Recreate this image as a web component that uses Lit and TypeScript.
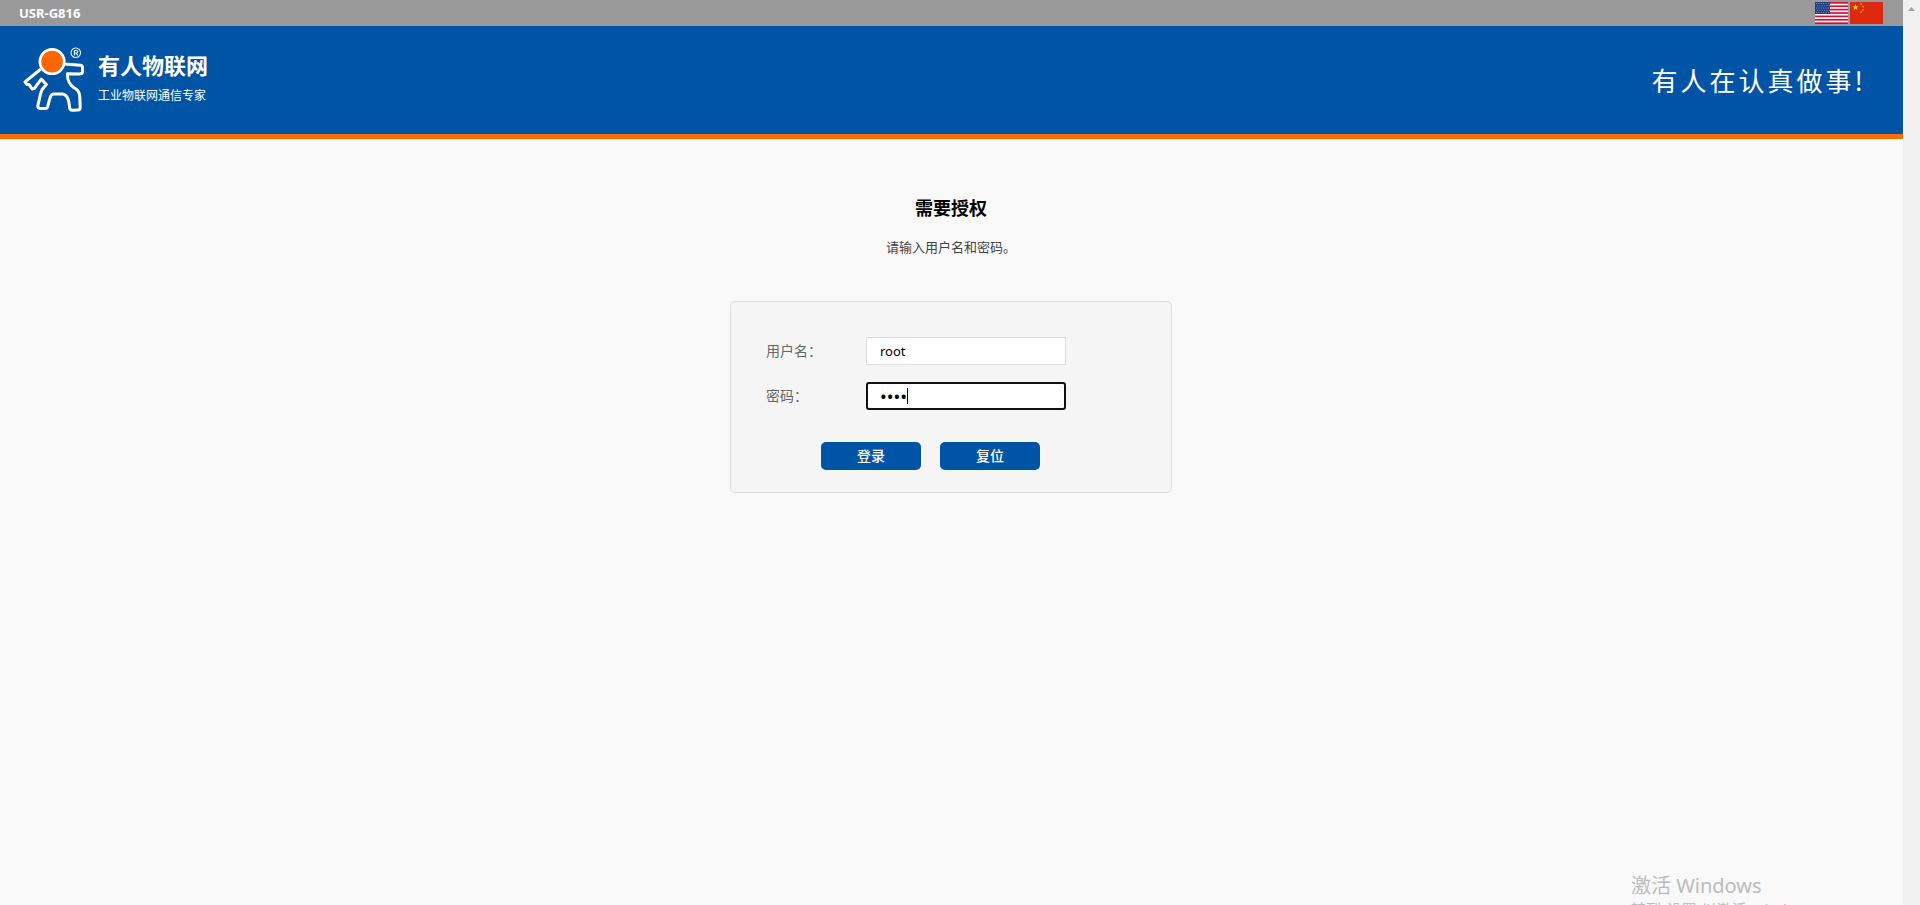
import { LitElement, html, css, svg } from "lit";
import { customElement, state, query } from "lit/decorators.js";

const STAR = "M0,-3 L0.9,-0.9 3,-0.9 1.3,0.5 1.9,2.7 0,1.4 -1.9,2.7 -1.3,0.5 -3,-0.9 -0.9,-0.9Z";

@customElement("brand-logo")
export class BrandLogo extends LitElement {
  static styles = css`
    :host { display: block; width: 63px; height: 69px; }
    svg { display: block; width: 100%; height: 100%; }
    .line { fill: none; stroke: #fff; stroke-width: 9; stroke-linejoin: round; }
    .head { fill: #ff6600; stroke: #fff; stroke-width: 8; }
    .mark { fill: none; stroke: #fff; stroke-width: 3; }
  `;
  render() {
    return html`
      <svg viewBox="25 21 186 204" preserveAspectRatio="xMinYMin meet" aria-hidden="true">
        <path class="line" d="M78,89 L31,127 L37,135 L43,135 L52,148 L58,147 L79,119 L94,135 L82,149 C78,156 78,160 76,166 L69,197 Q68,205 75,206 L92,206 Q97,206 99,197 C103,180 106,164 114,163 L142,163 C153,164 161,178 163,204 Q164,211 171,211 L188,210 Q194,210 194,203 L193,172 C192,155 186,150 174,143 C164,136 157,128 156,103 L192,104 Q200,104 201,98 L201,84 Q201,79 195,78 L146,74"></path>
        <circle class="head" cx="111" cy="67" r="36"></circle>
        <circle class="mark" cx="181" cy="41" r="14"></circle>
        <path class="mark" d="M177,49 V34 H182 Q187,34 187,38 Q187,42 182,42 H177 M182,42 L187,49"></path>
      </svg>
    `;
  }
}

@customElement("app-root")
export class AppRoot extends LitElement {
  static styles = css`
    :host {
      display: flex;
      position: relative;
      min-height: 100vh;
      overflow: hidden;
      background: #f9f9f9;
      color: #000;
      font-family: "Noto Sans", "Noto Sans CJK SC", sans-serif;
      font-size: 14px;
    }
    * { box-sizing: border-box; }
    .page { flex: 1; min-width: 0; }
    .topbar {
      display: flex;
      align-items: center;
      justify-content: space-between;
      height: 26px;
      padding: 0 20px 0 19px;
      background: #999;
      color: #fff;
    }
    .model { font-size: 13px; line-height: 26px; font-weight: 700; }
    .langs { display: flex; gap: 2px; }
    .flag {
      display: block;
      width: 33px;
      height: 22px;
      padding: 0;
      border: 0;
      background: none;
      cursor: pointer;
    }
    .flag svg { display: block; width: 33px; height: 22px; }
    .header {
      display: flex;
      align-items: center;
      justify-content: space-between;
      height: 113px;
      padding: 0 37px 0 23px;
      background: #0054a6;
      border-bottom: 5px solid #ff6d00;
      color: #fff;
    }
    .brand { display: flex; align-items: center; gap: 12px; }
    .name {
      margin: 0 0 3px;
      font-family: "Noto Sans CJK SC", sans-serif;
      font-size: 22px;
      line-height: 32px;
      font-weight: 700;
    }
    .tag {
      margin: 0;
      padding-bottom: 5px;
      font-family: "Noto Sans CJK SC", sans-serif;
      font-size: 12px;
      line-height: 24px;
    }
    .slogan {
      margin: 0;
      font-family: "Noto Sans CJK SC", sans-serif;
      font-size: 26px;
      line-height: 36px;
      letter-spacing: 3px;
    }
    .main {
      display: flex;
      flex-direction: column;
      align-items: center;
      padding: 56px 20px 0 19px;
    }
    .title { margin: 0; font-size: 18px; line-height: 26px; font-weight: 700; }
    .hint { margin: 16px 0 0; color: #444; font-size: 13px; line-height: 20px; }
    .card {
      display: flex;
      flex-direction: column;
      gap: 17px;
      width: 442px;
      max-width: 100%;
      margin: 44px 0 0;
      padding: 35px 35px 22px;
      border: 1px solid #ddd;
      border-radius: 5px;
      background: #f5f5f5;
    }
    .row { display: flex; align-items: center; }
    .label { width: 100px; color: #666; line-height: 28px; }
    .box { position: relative; display: flex; }
    .field {
      width: 200px;
      height: 28px;
      padding: 0 13px;
      border: 1px solid #dcdcdc;
      border-radius: 0;
      background: #fff;
      color: #000;
      font: inherit;
      font-size: 13px;
      outline: none;
    }
    .secret { font-size: 18px; caret-color: transparent; }
    .field:focus, .field.active {
      padding: 0 12px;
      border: 2px solid #101010;
      border-radius: 3px;
    }
    .caret {
      position: absolute;
      top: 6px;
      width: 1px;
      height: 16px;
      background: #000;
      pointer-events: none;
    }
    .actions { display: flex; gap: 19px; padding: 15px 0 0 55px; }
    .btn {
      width: 100px;
      height: 28px;
      padding: 0;
      border: 0;
      border-radius: 5px;
      background: #0054a6;
      color: #fff;
      font: inherit;
      font-weight: 500;
      line-height: 28px;
      cursor: pointer;
    }
    .scrollbar {
      display: flex;
      justify-content: center;
      width: 17px;
      padding-top: 7px;
      background: #f0f0f0;
    }
    .scrollbar svg { display: block; width: 7px; height: 4px; }
    .watermark {
      position: absolute;
      top: calc(100vh - 33px);
      right: 105px;
      width: 184px;
      color: #bcbcbc;
      white-space: nowrap;
      pointer-events: none;
    }
    .mark-title { margin: 0; font-size: 20px; line-height: 28px; }
    .mark-text { margin: 0; font-size: 15px; line-height: 18px; }
  `;

  @state() private username = "root";
  @state() private password = "root";
  @query("#password") private passwordField!: HTMLInputElement;

  firstUpdated() {
    this.passwordField.focus();
    this.passwordField.setSelectionRange(4, 4);
  }

  private submit(e: Event) {
    e.preventDefault();
  }

  private reset() {
    this.username = "root";
    this.password = "";
  }

  private usFlag() {
    const stars = [];
    for (let r = 0; r < 5; r++) {
      for (let c = 0; c < 6; c++) {
        stars.push(svg`<circle cx=${1.5 + c * 2.4 + (r % 2)} cy=${1.6 + r * 2.2} r="0.5" fill="#aab4d8"></circle>`);
      }
    }
    return html`
      <svg viewBox="0 0 33 22" aria-hidden="true">
        <rect width="33" height="22" fill="#fff"></rect>
        ${[0, 1, 2, 3, 4, 5, 6].map((i) => svg`<rect y=${(i * 44) / 13} width="33" height="1.7" fill="#d80f35"></rect>`)}
        <rect width="15" height="12" fill="#1f3f7f"></rect>
        ${stars}
      </svg>
    `;
  }

  private cnFlag() {
    const small = [[11, 2], [13, 4.5], [13, 8], [11, 10]];
    return html`
      <svg viewBox="0 0 33 22" aria-hidden="true">
        <rect width="33" height="22" fill="#de2910"></rect>
        <path d=${STAR} transform="translate(5.5 5.2)" fill="#ffde00"></path>
        ${small.map(([x, y]) => svg`<path d=${STAR} transform="translate(${x} ${y}) rotate(20) scale(0.4)" fill="#ffc400"></path>`)}
      </svg>
    `;
  }

  render() {
    return html`
      <div class="page">
        <div class="topbar">
          <span class="model">USR-G816</span>
          <div class="langs">
            <button class="flag" type="button" aria-label="English">${this.usFlag()}</button>
            <button class="flag" type="button" aria-label="中文">${this.cnFlag()}</button>
          </div>
        </div>
        <header class="header">
          <div class="brand">
            <brand-logo></brand-logo>
            <div>
              <h1 class="name">有人物联网</h1>
              <p class="tag">工业物联网通信专家</p>
            </div>
          </div>
          <p class="slogan">有人在认真做事!</p>
        </header>
        <main class="main">
          <h2 class="title">需要授权</h2>
          <p class="hint">请输入用户名和密码。</p>
          <form class="card" @submit=${this.submit}>
            <div class="row">
              <label class="label" for="username">用户名：</label>
              <input class="field" id="username" type="text" .value=${this.username}
                @input=${(e: Event) => (this.username = (e.target as HTMLInputElement).value)} />
            </div>
            <div class="row">
              <label class="label" for="password">密码：</label>
              <div class="box">
                <input class="field secret active" id="password" type="password" .value=${this.password}
                  @input=${(e: Event) => (this.password = (e.target as HTMLInputElement).value)} />
                <span class="caret" style="left: ${13 + this.password.length * 7}px"></span>
              </div>
            </div>
            <div class="actions">
              <button class="btn" type="submit">登录</button>
              <button class="btn" type="button" @click=${this.reset}>复位</button>
            </div>
          </form>
        </main>
      </div>
      <div class="scrollbar" aria-hidden="true">
        <svg viewBox="0 0 7 4"><path d="M0,4 L3.5,0 L7,4Z" fill="#a3a3a3"></path></svg>
      </div>
      <div class="watermark">
        <p class="mark-title">激活 Windows</p>
        <p class="mark-text">转到“设置”以激活 Windows。</p>
      </div>
    `;
  }
}
